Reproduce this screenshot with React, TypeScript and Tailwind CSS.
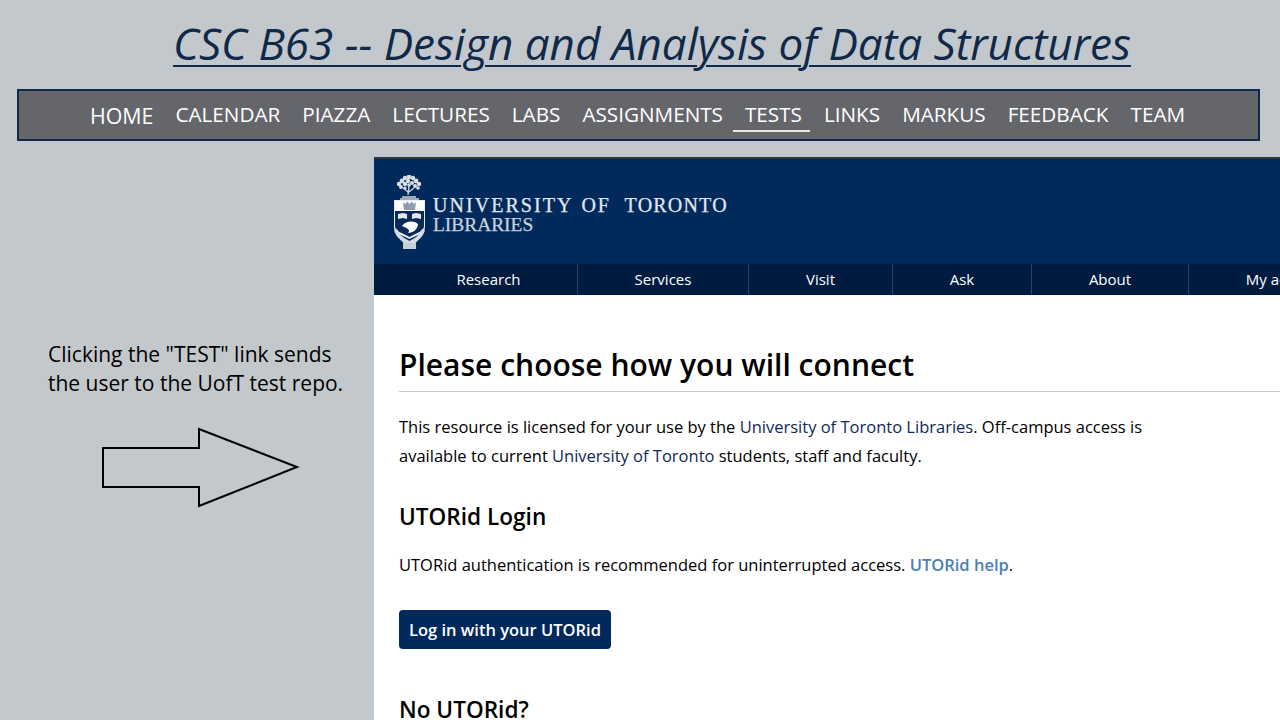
const navItems = ["HOME", "CALENDAR", "PIAZZA", "LECTURES", "LABS", "ASSIGNMENTS", "TESTS", "LINKS", "MARKUS", "FEEDBACK", "TEAM"];

const libTabs = [
  { label: "Research", width: "w-[204px] pl-[26px]" },
  { label: "Services", width: "w-[171px]" },
  { label: "Visit", width: "w-[144px]" },
  { label: "Ask", width: "w-[139px]" },
  { label: "About", width: "w-[157px]" },
  { label: "My account", width: "w-[194px]" },
];

const treeDots = [
  [15, 2, 2.4], [11, 3, 2.2], [19, 3, 2.2], [8, 6, 2.4], [22, 6, 2.4], [14, 6, 2.2], [18, 8, 2],
  [5, 9, 2.2], [25, 9, 2.2], [11, 9, 2.2], [15, 10, 1.8], [21, 11, 2], [7, 12, 2], [24, 13, 1.8], [11, 13, 1.6],
];

function Crest() {
  return (
    <svg width="32" height="75" viewBox="0 0 32 75" className="shrink-0 blur-[0.4px]">
      {/* tree */}
      <g fill="#d9dee6">
        {treeDots.map(([cx, cy, r]) => (
          <circle key={`${cx}-${cy}`} cx={cx} cy={cy} r={r} />
        ))}
      </g>
      <path d="M15 11 L14 20 M9 13 L14 17 M20 13 L15 17 M8 22 L22 22 M6 24 L25 24" stroke="#cfd5df" strokeWidth="1.4" fill="none" />
      {/* shield */}
      <path d="M0 25 H31 V52 C31 58 24 60 15.5 64 C7 60 0 58 0 52 Z" fill="#e9ecf1" />
      <rect x="1" y="26" width="29" height="10" fill="#ffffff" />
      <path d="M1 36 H30 V51 C30 56 23 58 15.5 62 C8 58 1 56 1 51 Z" fill="#0c2a57" />
      {/* crown */}
      <path d="M9 27 L11 29 L13.5 26.5 L15.5 29 L18 26.5 L20 29 L22 27 L21 35 H10 Z" fill="#8f9bb0" />
      {/* books */}
      <path d="M4 39 L9 38 L13 39 V44 L9 43 L4 44 Z" fill="#e3e7ed" />
      <path d="M18 39 L22 38 L27 39 V44 L22 43 L18 44 Z" fill="#e3e7ed" />
      {/* beaver */}
      <path d="M8 51 C11 46 20 45 24 49 C24 54 19 58 14 58 C17 55 13 53 8 51 Z" fill="#ffffff" />
      {/* motto scroll */}
      <path d="M0 55 C2 63 8 65 10 69 H21 C23 65 29 63 31 55 L28 54 C26 60 21 63 15.5 66 C10 63 5 60 3 54 Z" fill="#d5dbe4" />
      <rect x="9" y="68" width="13" height="6" fill="#c8cfda" />
    </svg>
  );
}

export default function App() {
  return (
    <div className="w-[1280px] h-[720px] overflow-hidden bg-[#c3c8cc] font-['Open_Sans',sans-serif]">
      <h1 className="pl-[24px] pt-[16px] h-[89px] text-center text-[44px] leading-[54px] italic text-[#10294a] whitespace-nowrap">
        <span className="underline decoration-2 underline-offset-[5px]">CSC B63 -- Design and Analysis of Data Structures</span>
      </h1>

      <nav className="ml-[17px] w-[1243px] h-[52px] border-2 border-[#10294a] bg-[#65666b] flex justify-center gap-[22px] pr-[2px] text-white text-[20.7px] leading-[47px]">
        {navItems.map((item) => (
          <a key={item} className={item === "TESTS" ? "relative" : item === "HOME" ? "pt-[1px] text-[21.4px]" : ""}>
            {item}
            {item === "TESTS" && <span className="absolute -left-[12px] -right-[8px] top-[39px] h-[2px] bg-[#e8e8e8]" />}
          </a>
        ))}
      </nav>

      <div className="flex mt-[16px]">
        <aside className="w-[374px] shrink-0">
          <p className="pl-[48px] pt-[183px] text-[21px] leading-[29px] text-black whitespace-nowrap">
            Clicking the "TEST" link sends
            <br />
            the user to the UofT test repo.
          </p>
          <svg width="374" height="100" viewBox="0 0 374 100" className="mt-[23px]">
            <path d="M103 27 H199 V8 L297 46 L199 85 V66 H103 Z" fill="none" stroke="#000" strokeWidth="2" />
          </svg>
        </aside>

        <main className="w-[906px] h-[563px] overflow-hidden bg-white border-t-2 border-[#33363d]">
          <div className="h-[105px] bg-[#012a5c] pl-[20px] pt-[16px] flex gap-[7px]">
            <Crest />
            <div className="pt-[19px] font-['Liberation_Serif',serif] text-[#e3e7ed] whitespace-nowrap [-webkit-text-stroke:0.25px_#e3e7ed]">
              <div className="text-[20px] leading-[22px]">
                <span className="tracking-[2.05px]">UNIVERSITY</span>
                <span className="ml-[8px] tracking-[1.75px]">OF</span>
                <span className="ml-[14px] tracking-[1.2px]">TORONTO</span>
              </div>
              <div className="text-[19.4px] leading-[18px] text-[#c9d0db] [-webkit-text-stroke:0.25px_#c9d0db]">LIBRARIES</div>
            </div>
          </div>

          <div className="h-[31px] bg-[#001b40] flex text-white text-[15px] leading-[31px] whitespace-nowrap">
            {libTabs.map((tab, i) => (
              <div key={tab.label} className={`${tab.width} shrink-0 text-center ${i < libTabs.length - 1 ? "border-r border-[#23456f]" : ""}`}>
                {tab.label}
              </div>
            ))}
          </div>

          <div className="pl-[25px] text-black">
            <h2 className="pt-[50px] pb-[6px] text-[30px] leading-[40px] font-semibold text-black border-b border-[#cccccc] whitespace-nowrap">
              Please choose how you will connect
            </h2>
            <p className="mt-[20px] text-[16.5px] leading-[29px] whitespace-nowrap">
              This resource is licensed for your use by the <span className="text-[#0f2a55]">University of Toronto Libraries</span>. Off-campus access is
              <br />
              available to current <span className="text-[#0f2a55]">University of Toronto</span> students, staff and faculty.
            </p>
            <h3 className="mt-[32px] text-[22.6px] leading-[30px] font-semibold whitespace-nowrap">UTORid Login</h3>
            <p className="mt-[18px] text-[16.5px] leading-[29px] whitespace-nowrap">
              UTORid authentication is recommended for uninterrupted access. <a className="font-semibold text-[#4a7fb8]">UTORid help</a>.
            </p>
            <button className="block mt-[31px] h-[39px] w-[212px] pt-[1px] rounded-[4px] bg-[#012a5c] text-white text-[16.5px] font-semibold whitespace-nowrap">
              Log in with your UTORid
            </button>
            <h3 className="mt-[46px] text-[22.6px] leading-[30px] font-semibold whitespace-nowrap">No UTORid?</h3>
          </div>
        </main>
      </div>
    </div>
  );
}
